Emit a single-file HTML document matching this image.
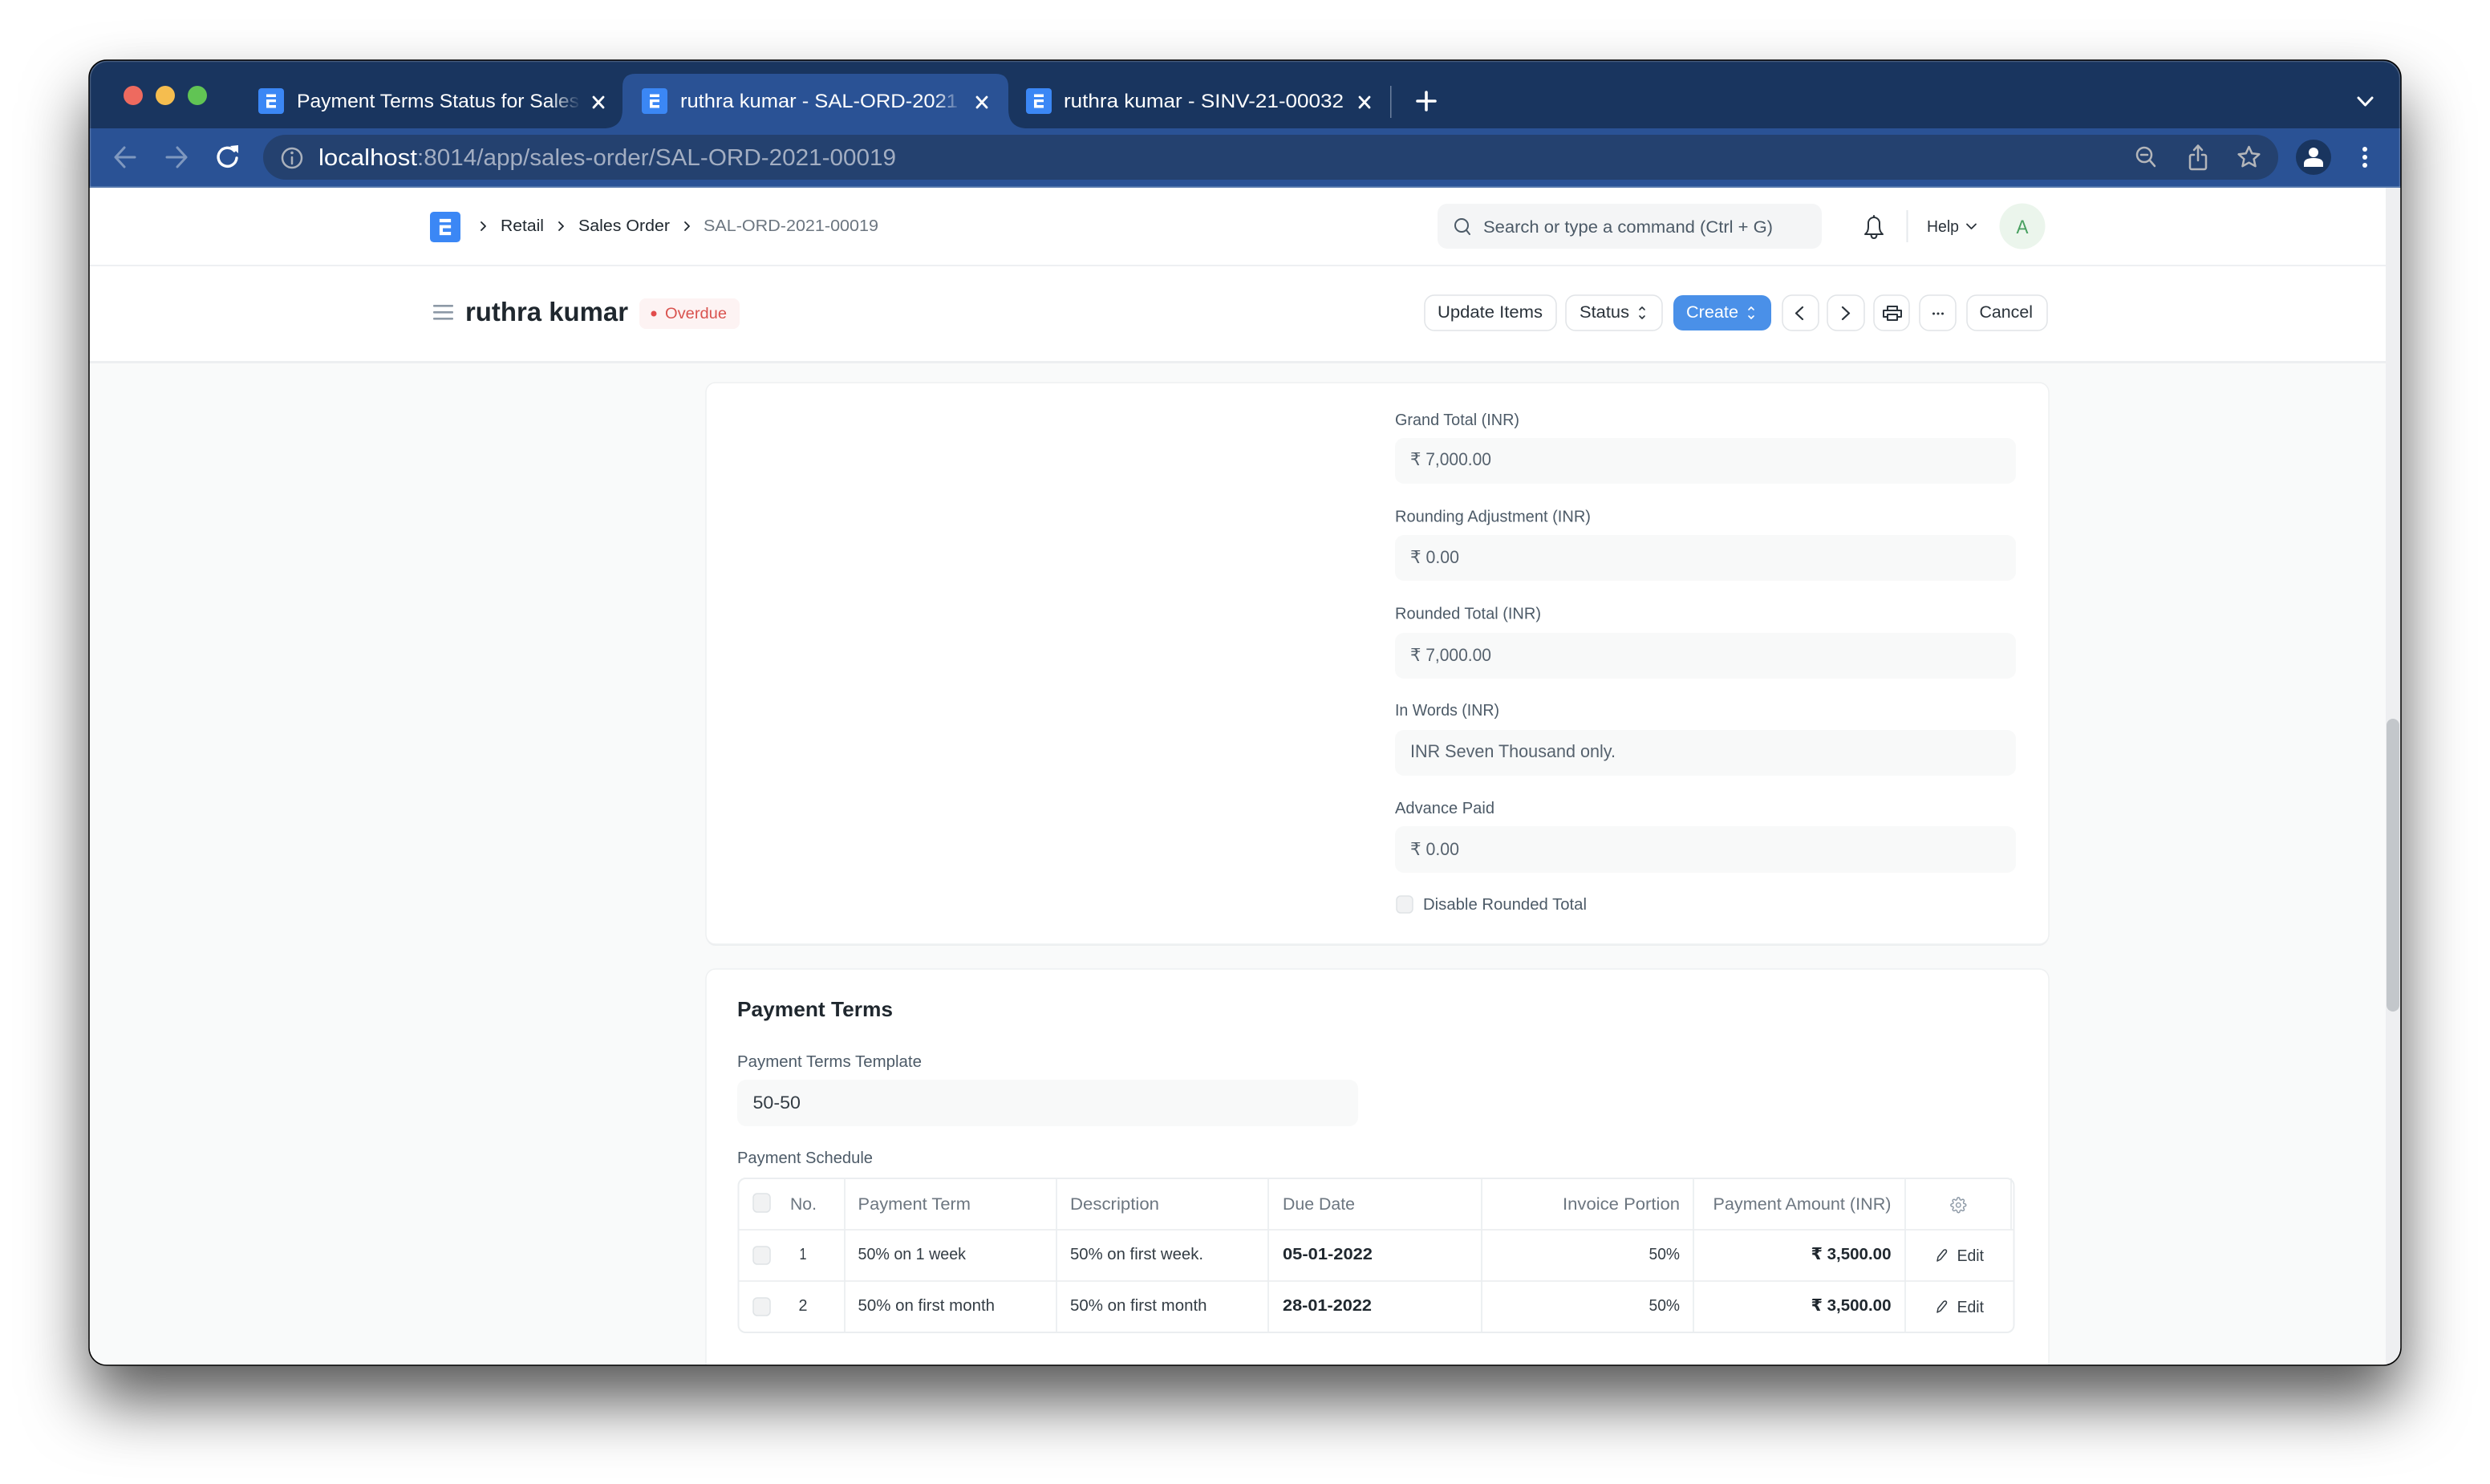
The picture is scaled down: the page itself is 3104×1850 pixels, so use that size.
<!DOCTYPE html>
<html lang="en"><head><meta charset="utf-8"><title>ruthra kumar - SAL-ORD-2021-00019</title>
<style>
html,body{margin:0;padding:0;background:#fff;width:3104px;height:1850px;overflow:hidden}
#shadow{position:absolute;left:111px;top:75px;width:2882px;height:1627px;border-radius:22px;box-shadow:0 45px 80px rgba(0,0,0,.66)}
svg{position:absolute;left:0;top:0}
text{font-family:"Liberation Sans","DejaVu Sans",sans-serif;font-size:20px;fill:#4c5a67;white-space:pre}
.tab{font-size:24px;fill:#fff}
.lab{font-size:20.500px;fill:#4c5a67}
.val{font-size:22px;fill:#56626e}
.th{font-size:21.500px;fill:#6c7680}
.td{font-size:20.500px;fill:#333c44}
.b{font-size:20.500px;font-weight:bold;fill:#1f272e}
.btn{font-size:21.500px;fill:#2a323a}
.ic{fill:none;stroke-linecap:round;stroke-linejoin:round}
</style></head><body>
<div id="shadow"></div>
<svg width="3104" height="1850" viewBox="0 0 3104 1850" xmlns="http://www.w3.org/2000/svg">
<defs>
<clipPath id="win"><rect x="111" y="75" width="2882" height="1627" rx="22"/></clipPath>
<linearGradient id="f1"><stop offset="0" stop-color="#19355f" stop-opacity="0"/><stop offset="1" stop-color="#19355f"/></linearGradient>
<linearGradient id="f2"><stop offset="0" stop-color="#2a5295" stop-opacity="0"/><stop offset="1" stop-color="#2a5295"/></linearGradient>
<g id="fav"><rect width="32" height="32" rx="4" fill="#3b87f5"/><path d="M10 7.500h12v3.500H10zM10 14h12v3.300h-8.500v3.700H22v3.500H10z" fill="#fff"/></g>
<path id="gear" d="M19.400 15a1.650 1.650 0 0 0 .33 1.820l.06.06a2 2 0 0 1 0 2.830 2 2 0 0 1-2.830 0l-.06-.06a1.650 1.650 0 0 0-1.820-.33 1.650 1.650 0 0 0-1 1.510V21a2 2 0 0 1-2 2 2 2 0 0 1-2-2v-.09A1.650 1.650 0 0 0 9 19.400a1.650 1.650 0 0 0-1.820.33l-.06.06a2 2 0 0 1-2.830 0 2 2 0 0 1 0-2.830l.06-.06a1.650 1.650 0 0 0 .33-1.820 1.650 1.650 0 0 0-1.510-1H3a2 2 0 0 1-2-2 2 2 0 0 1 2-2h.09A1.650 1.650 0 0 0 4.600 9a1.650 1.650 0 0 0-.33-1.820l-.06-.06a2 2 0 0 1 0-2.830 2 2 0 0 1 2.830 0l.06.06a1.650 1.650 0 0 0 1.820.33H9a1.650 1.650 0 0 0 1-1.510V3a2 2 0 0 1 2-2 2 2 0 0 1 2 2v.09a1.650 1.650 0 0 0 1 1.510 1.650 1.650 0 0 0 1.820-.33l.06-.06a2 2 0 0 1 2.830 0 2 2 0 0 1 0 2.830l-.06.06a1.650 1.650 0 0 0-.33 1.820V9a1.650 1.650 0 0 0 1.510 1H21a2 2 0 0 1 2 2 2 2 0 0 1-2 2h-.09a1.650 1.650 0 0 0-1.510 1z"/>
</defs>
<g clip-path="url(#win)">
<rect x="111" y="75" width="2882" height="1627" fill="#f9fafa"/>
<rect x="111" y="75" width="2882" height="85" fill="#19355f"/>
<rect x="111" y="160" width="2882" height="72" fill="#2a5295"/>
<rect x="111" y="232" width="2882" height="2" fill="#5376ab"/>
<path d="M752 160Q776 160 776 136V108Q776 92 792 92H1241Q1257 92 1257 108V136Q1257 160 1281 160Z" fill="#2a5295"/>
<circle cx="166" cy="119" r="12" fill="#ee6a5f"/><circle cx="206" cy="119" r="12" fill="#f5bd4f"/><circle cx="246" cy="119" r="12" fill="#61c454"/>
<use href="#fav" x="322" y="110"/><use href="#fav" x="800" y="110"/><use href="#fav" x="1279" y="110"/>
<text class="tab" x="370" y="134" textLength="352" lengthAdjust="spacingAndGlyphs">Payment Terms Status for Sales</text>
<rect x="684" y="100" width="40" height="50" fill="url(#f1)"/>
<text class="tab" x="848" y="134" textLength="346" lengthAdjust="spacingAndGlyphs">ruthra kumar - SAL-ORD-2021</text>
<rect x="1165" y="100" width="34" height="50" fill="url(#f2)"/>
<text class="tab" x="1326" y="134" textLength="349" lengthAdjust="spacingAndGlyphs">ruthra kumar - SINV-21-00032</text>
<g class="ic" stroke="#fff" stroke-width="2.800">
<path d="M740 121l12 13M752 121l-12 13"/><path d="M1218 121l12 13M1230 121l-12 13"/><path d="M1695 121l12 13M1707 121l-12 13"/>
<path d="M1767 126h22M1778 115v22" stroke-width="3.600"/>
<path d="M2940 122l8.500 9 8.500-9" stroke-width="3"/>
</g>
<rect x="1733" y="107" width="1.500" height="40" fill="#6b7f9d"/>
<rect x="328" y="168" width="2512" height="56" rx="28" fill="#24416f"/>
<g class="ic" stroke="#7f98bf" stroke-width="3">
<path d="M168 196h-24M155 184l-11 12 11 12"/><path d="M208 196h24M221 184l11 12-11 12"/>
</g>
<g class="ic" stroke="#fff" stroke-width="3.400"><path d="M292 188a11.500 11.500 0 1 0 3 9"/></g>
<path d="M287 182l10-1v10z" fill="#fff"/>
<g class="ic" stroke="#aab1bc" stroke-width="2.500"><circle cx="364" cy="197" r="12"/><path d="M364 196v8"/></g><circle cx="364" cy="190.500" r="1.800" fill="#aab1bc"/>
<text x="397" y="206" style="font-size:28.500px;fill:#fff" textLength="123" lengthAdjust="spacingAndGlyphs">localhost</text>
<text x="520" y="206" style="font-size:28.500px;fill:#a3aec2" textLength="597" lengthAdjust="spacingAndGlyphs">:8014/app/sales-order/SAL-ORD-2021-00019</text>
<g class="ic" stroke="#b4b6ba" stroke-width="2.500">
<circle cx="2673" cy="193" r="9"/><path d="M2680 200l6 7M2669 193h8"/>
<path d="M2735 193h-3a2 2 0 0 0-2 2v14a2 2 0 0 0 2 2h16a2 2 0 0 0 2-2v-14a2 2 0 0 0-2-2h-3M2740 200v-18M2735 187l5-5.500 5 5.500"/>
<path d="M2803.500 183l3.800 8.300 9 1-6.700 6 1.900 8.900-8-4.500-8 4.500 1.900-8.900-6.700-6 9-1z"/>
</g>
<circle cx="2884" cy="196" r="22" fill="#19355f"/><circle cx="2884" cy="190" r="6" fill="#fff"/><path d="M2872 208v-4q0-7 12-7t12 7v4z" fill="#fff"/>
<circle cx="2948" cy="186" r="3" fill="#fff"/><circle cx="2948" cy="196" r="3" fill="#fff"/><circle cx="2948" cy="206" r="3" fill="#fff"/>

<rect x="111" y="234" width="2863" height="96" fill="#fff"/>
<rect x="111" y="330" width="2863" height="2" fill="#eef0f2"/>
<rect x="111" y="332" width="2863" height="118" fill="#fff"/>
<rect x="111" y="450" width="2863" height="3" fill="#edeff1"/>
<rect x="2974" y="234" width="19" height="1468" fill="#eeeff1"/>
<rect x="2975" y="896" width="16" height="365" rx="8" fill="#c3c7cb"/>

<g transform="translate(536 264) scale(1.1875)"><use href="#fav"/></g>
<g class="ic" stroke="#1f272e" stroke-width="1.800"><path d="M600 277l5 5-5 5M697 277l5 5-5 5M854 277l5 5-5 5"/></g>
<text x="624" y="288" textLength="54" lengthAdjust="spacingAndGlyphs" style="fill:#1f272e">Retail</text>
<text x="721" y="288" textLength="114" lengthAdjust="spacingAndGlyphs" style="fill:#1f272e">Sales Order</text>
<text x="877" y="288" textLength="218" lengthAdjust="spacingAndGlyphs" style="fill:#6c7680">SAL-ORD-2021-00019</text>
<rect x="1792" y="254" width="479" height="56" rx="12" fill="#f4f5f6"/>
<g class="ic" stroke="#4c5a67" stroke-width="2"><circle cx="1822" cy="281" r="8"/><path d="M1828 287l4 5"/></g>
<text x="1849" y="290" style="font-size:21.500px;fill:#4c5a67" textLength="361" lengthAdjust="spacingAndGlyphs">Search or type a command (Ctrl + G)</text>
<g class="ic" stroke="#2a323a" stroke-width="2"><path d="M2325 292q4-3 4-9v-5a7 7 0 0 1 14 0v5q0 6 4 9zM2332.500 293q.5 4 3.500 4t3.500-4M2336 271v-2"/></g>
<rect x="2376.500" y="262" width="2" height="40" fill="#e6e9ec"/>
<text x="2402" y="289" textLength="40" lengthAdjust="spacingAndGlyphs" style="fill:#2a323a">Help</text>
<path class="ic" stroke="#2a323a" stroke-width="1.800" d="M2452 279.500l5.500 5.500 5.500-5.500"/>
<circle cx="2521" cy="282" r="28.500" fill="#ebf5ec"/>
<text x="2513.500" y="291" style="font-size:24px;fill:#48a060" textLength="15" lengthAdjust="spacingAndGlyphs">A</text>

<g fill="#8d99a6"><rect x="540" y="380" width="25" height="2.600" rx="1"/><rect x="540" y="388" width="25" height="2.600" rx="1"/><rect x="540" y="396" width="25" height="2.600" rx="1"/></g>
<text x="580" y="400" style="font-size:33px;font-weight:bold;fill:#1f272e" textLength="203" lengthAdjust="spacingAndGlyphs">ruthra kumar</text>
<rect x="797" y="372" width="125" height="38" rx="8" fill="#fdf3f3"/>
<circle cx="815" cy="391" r="3.500" fill="#e24c4c"/>
<text x="829" y="397" style="font-size:19px;fill:#d9534f" textLength="77" lengthAdjust="spacingAndGlyphs">Overdue</text>
<g fill="#fff" stroke="#e1e4e7" stroke-width="1.500">
<rect x="1776" y="368" width="164" height="44" rx="12"/><rect x="1952" y="368" width="120" height="44" rx="12"/>
<rect x="2222" y="368" width="45" height="44" rx="12"/><rect x="2278" y="368" width="46" height="44" rx="12"/>
<rect x="2336" y="368" width="44" height="44" rx="12"/><rect x="2393" y="368" width="45" height="44" rx="12"/>
<rect x="2452" y="368" width="100" height="44" rx="12"/>
</g>
<rect x="2086" y="368" width="122" height="44" rx="12" fill="#4a90e8"/>
<text class="btn" x="1792" y="396" textLength="131" lengthAdjust="spacingAndGlyphs">Update Items</text>
<text class="btn" x="1969" y="396" textLength="62" lengthAdjust="spacingAndGlyphs">Status</text>
<text class="btn" x="2102" y="396" textLength="65" lengthAdjust="spacingAndGlyphs" style="fill:#fff">Create</text>
<text class="btn" x="2467.500" y="396" textLength="66.500" lengthAdjust="spacingAndGlyphs">Cancel</text>
<g class="ic" stroke="#2a323a" stroke-width="1.600"><path d="M2044 386l3-3 3 3M2044 394l3 3 3-3"/></g>
<g class="ic" stroke="#fff" stroke-width="1.600"><path d="M2180 386l3-3 3 3M2180 394l3 3 3-3"/></g>
<g class="ic" stroke="#2a323a" stroke-width="2.200"><path d="M2247 383l-8 7.500 8 7.500M2297 383l8 7.500-8 7.500"/></g>
<g class="ic" stroke="#2a323a" stroke-width="2"><path d="M2353 387v-5h12v5M2353 395h-5v-8h22v8h-5M2353 392h12v7h-12z"/></g>
<g fill="#2a323a"><circle cx="2410.500" cy="391" r="1.500"/><circle cx="2416" cy="391" r="1.500"/><circle cx="2421.500" cy="391" r="1.500"/></g>

<!-- card 1 -->
<rect x="880" y="479" width="1674" height="700" rx="12" fill="#eceef0"/>
<rect x="880" y="477" width="1674" height="700" rx="12" fill="#fff" stroke="#eef0f1" stroke-width="1.500"/>
<text class="lab" x="1739" y="530" textLength="155" lengthAdjust="spacingAndGlyphs">Grand Total (INR)</text>
<text class="lab" x="1739" y="650.500" textLength="244" lengthAdjust="spacingAndGlyphs">Rounding Adjustment (INR)</text>
<text class="lab" x="1739" y="771.500" textLength="182" lengthAdjust="spacingAndGlyphs">Rounded Total (INR)</text>
<text class="lab" x="1739" y="892" textLength="130" lengthAdjust="spacingAndGlyphs">In Words (INR)</text>
<text class="lab" x="1739" y="1014" textLength="124" lengthAdjust="spacingAndGlyphs">Advance Paid</text>
<g fill="#f8f9f9">
<rect x="1739" y="546" width="774" height="57" rx="11"/><rect x="1739" y="667" width="774" height="57" rx="11"/>
<rect x="1739" y="789" width="774" height="57" rx="11"/><rect x="1739" y="910" width="774" height="57" rx="11"/>
<rect x="1739" y="1030" width="774" height="58" rx="11"/>
</g>
<text class="val" x="1758" y="580" textLength="101" lengthAdjust="spacingAndGlyphs">₹ 7,000.00</text>
<text class="val" x="1758" y="702" textLength="61" lengthAdjust="spacingAndGlyphs">₹ 0.00</text>
<text class="val" x="1758" y="824" textLength="101" lengthAdjust="spacingAndGlyphs">₹ 7,000.00</text>
<text class="val" x="1758" y="944" textLength="256" lengthAdjust="spacingAndGlyphs">INR Seven Thousand only.</text>
<text class="val" x="1758" y="1066" textLength="61" lengthAdjust="spacingAndGlyphs">₹ 0.00</text>
<rect x="1741" y="1117" width="20" height="21" rx="5" fill="#f1f2f3" stroke="#dfe3e6" stroke-width="1.500"/>
<text class="lab" x="1774" y="1134" textLength="204" lengthAdjust="spacingAndGlyphs">Disable Rounded Total</text>

<!-- card 2 -->
<rect x="880" y="1208" width="1674" height="560" rx="12" fill="#fff" stroke="#eef0f1" stroke-width="1.500"/>
<text x="919" y="1267" style="font-size:26px;font-weight:bold;fill:#1f272e" textLength="194" lengthAdjust="spacingAndGlyphs">Payment Terms</text>
<text class="lab" x="919" y="1330" textLength="230" lengthAdjust="spacingAndGlyphs">Payment Terms Template</text>
<rect x="919" y="1346" width="774" height="58" rx="11" fill="#f8f9f9"/>
<text x="938.500" y="1382" style="font-size:22px;fill:#333c44" textLength="59.500" lengthAdjust="spacingAndGlyphs">50-50</text>
<text class="lab" x="919" y="1450" textLength="169" lengthAdjust="spacingAndGlyphs">Payment Schedule</text>

<!-- table -->
<rect x="920.500" y="1469" width="1590" height="192" rx="9" fill="#fff" stroke="#ebeef0" stroke-width="2"/>
<path d="M921 1533H2510M921 1597H2510M1053 1469V1661M1317 1469V1661M1581 1469V1661M1847 1469V1661M2111 1469V1661M2375 1469V1661M2507 1469V1533" fill="none" stroke="#ebeef0" stroke-width="1.800"/>
<g fill="#f1f2f3" stroke="#dfe3e6" stroke-width="1.500">
<rect x="939" y="1488" width="21" height="23" rx="5"/><rect x="939" y="1554" width="21" height="22" rx="5"/><rect x="939" y="1618" width="21" height="22" rx="5"/>
</g>
<text class="th" x="985" y="1508" textLength="33" lengthAdjust="spacingAndGlyphs">No.</text>
<text class="th" x="1069.500" y="1508" textLength="140.500" lengthAdjust="spacingAndGlyphs">Payment Term</text>
<text class="th" x="1334" y="1508" textLength="111" lengthAdjust="spacingAndGlyphs">Description</text>
<text class="th" x="1599" y="1508" textLength="90" lengthAdjust="spacingAndGlyphs">Due Date</text>
<text class="th" x="1948" y="1508" textLength="146" lengthAdjust="spacingAndGlyphs">Invoice Portion</text>
<text class="th" x="2135.500" y="1508" textLength="222" lengthAdjust="spacingAndGlyphs">Payment Amount (INR)</text>
<g transform="translate(2431 1492) scale(.86)" class="ic" stroke="#8d99a6" stroke-width="1.700"><use href="#gear"/><circle cx="12" cy="12" r="3.200"/></g>

<text class="td" x="996.500" y="1570" textLength="9" lengthAdjust="spacingAndGlyphs">1</text>
<text class="td" x="1069.500" y="1570" textLength="134.500" lengthAdjust="spacingAndGlyphs">50% on 1 week</text>
<text class="td" x="1334" y="1570" textLength="166" lengthAdjust="spacingAndGlyphs">50% on first week.</text>
<text class="b" x="1599" y="1570" textLength="112" lengthAdjust="spacingAndGlyphs">05-01-2022</text>
<text class="td" x="2055.500" y="1570" textLength="38.500" lengthAdjust="spacingAndGlyphs">50%</text>
<text class="b" x="2257.600" y="1570" textLength="99.900" lengthAdjust="spacingAndGlyphs">₹ 3,500.00</text>
<text class="td" x="2439.600" y="1572" textLength="33.400" lengthAdjust="spacingAndGlyphs">Edit</text>

<text class="td" x="995.500" y="1634" textLength="11" lengthAdjust="spacingAndGlyphs">2</text>
<text class="td" x="1069.500" y="1634" textLength="170.500" lengthAdjust="spacingAndGlyphs">50% on first month</text>
<text class="td" x="1334" y="1634" textLength="170.500" lengthAdjust="spacingAndGlyphs">50% on first month</text>
<text class="b" x="1599" y="1634" textLength="111" lengthAdjust="spacingAndGlyphs">28-01-2022</text>
<text class="td" x="2055.500" y="1634" textLength="38.500" lengthAdjust="spacingAndGlyphs">50%</text>
<text class="b" x="2257.600" y="1634" textLength="99.900" lengthAdjust="spacingAndGlyphs">₹ 3,500.00</text>
<text class="td" x="2439.600" y="1636" textLength="33.400" lengthAdjust="spacingAndGlyphs">Edit</text>
<g class="ic" stroke="#333c44" stroke-width="1.500">
<path d="M2415 1572l1-5 7-8.500q2-1 3 0t0 3l-7 8.500z"/><path d="M2415 1636l1-5 7-8.500q2-1 3 0t0 3l-7 8.500z"/>
</g>
<path d="M112.500 233V97A21 21 0 0 1 133 76.500H2971A21 21 0 0 1 2991.500 97V233" fill="none" stroke="#fff" stroke-opacity=".2" stroke-width="1.500"/>
</g>
<rect x="111" y="75" width="2882" height="1627" rx="22" fill="none" stroke="#000" stroke-width="1.500"/>
</svg>
</body></html>
